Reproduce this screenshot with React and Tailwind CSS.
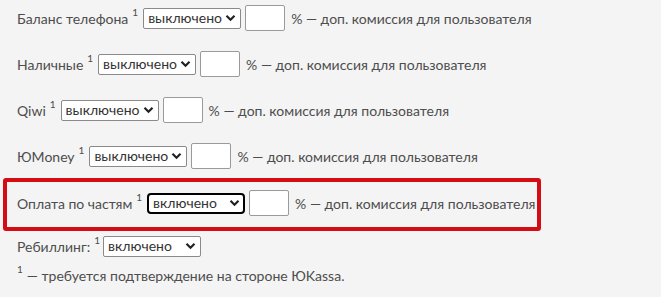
import React from 'react';

const rows = [
  { label: 'Баланс телефона', value: 'выключено' },
  { label: 'Наличные', value: 'выключено' },
  { label: 'Qiwi', value: 'выключено' },
  { label: 'ЮMoney', value: 'выключено' },
];

function Chevron() {
  return (
    <svg width="11" height="8" viewBox="0 0 11 8" className="pointer-events-none absolute right-[5px] top-1/2 -translate-y-1/2">
      <path d="M1.5 1.8 L5.5 5.8 L9.5 1.8" fill="none" stroke="#222" strokeWidth="2.2" />
    </svg>
  );
}

function Select({ value, focused }) {
  return (
    <div className="relative shrink-0">
      <select
        defaultValue={value}
        className={
          'appearance-none bg-white text-[#333] text-[14px] leading-none pl-[4px] w-[98px] ' +
          (focused
            ? 'h-[21px] border-2 border-black rounded-[4px] outline-none'
            : 'h-[21px] border border-[#8a8a8a] rounded-[2px]')
        }
      >
        <option>выключено</option>
        <option>включено</option>
      </select>
      <Chevron />
    </div>
  );
}

function Sup({ className = '' }) {
  return <span className={'text-[10px] relative -top-[6px] ' + className}>1</span>;
}

function Row({ label, value, focused }) {
  return (
    <div className="flex items-center h-[26px] whitespace-nowrap">
      <span>{label}</span>
      <Sup className="ml-[4px] mr-[5px]" />
      <Select value={value} focused={focused} />
      <input type="text" className="ml-[4px] shrink-0 w-[40px] h-[26px] bg-white border border-[#9a9a9a] rounded-[2px]" />
      <span className="ml-[6px]">% — доп. комиссия для пользователя</span>
    </div>
  );
}

export default function App() {
  return (
    <div
      className="w-[661px] h-[297px] bg-[#f4f4f4] text-[#4d4d4d] text-[14px] pt-[5px] pl-[3px]"
      style={{ fontFamily: 'Lato, "Liberation Sans", sans-serif' }}
    >
      <div className="flex flex-col gap-[20px] pl-[14px]">
        {rows.map((r) => (
          <Row key={r.label} {...r} />
        ))}
      </div>
      <div className="mt-[9px] w-[538px] h-[53px] border-[4px] border-[#d40c14] rounded-[3px] pl-[10px] pb-[3px] flex items-center">
        <Row label="Оплата по частям" value="включено" focused />
      </div>
      <div className="pl-[14px] mt-[2px]">
        <div className="flex items-center h-[26px] whitespace-nowrap">
          <span>Ребиллинг:</span>
          <Sup className="ml-[4px] mr-[3px]" />
          <Select value="включено" />
        </div>
        <p className="mt-[3px] h-[26px] flex items-center whitespace-nowrap">
          <Sup className="mr-[4px]" />
          — требуется подтверждение на стороне ЮKassa.
        </p>
      </div>
    </div>
  );
}
